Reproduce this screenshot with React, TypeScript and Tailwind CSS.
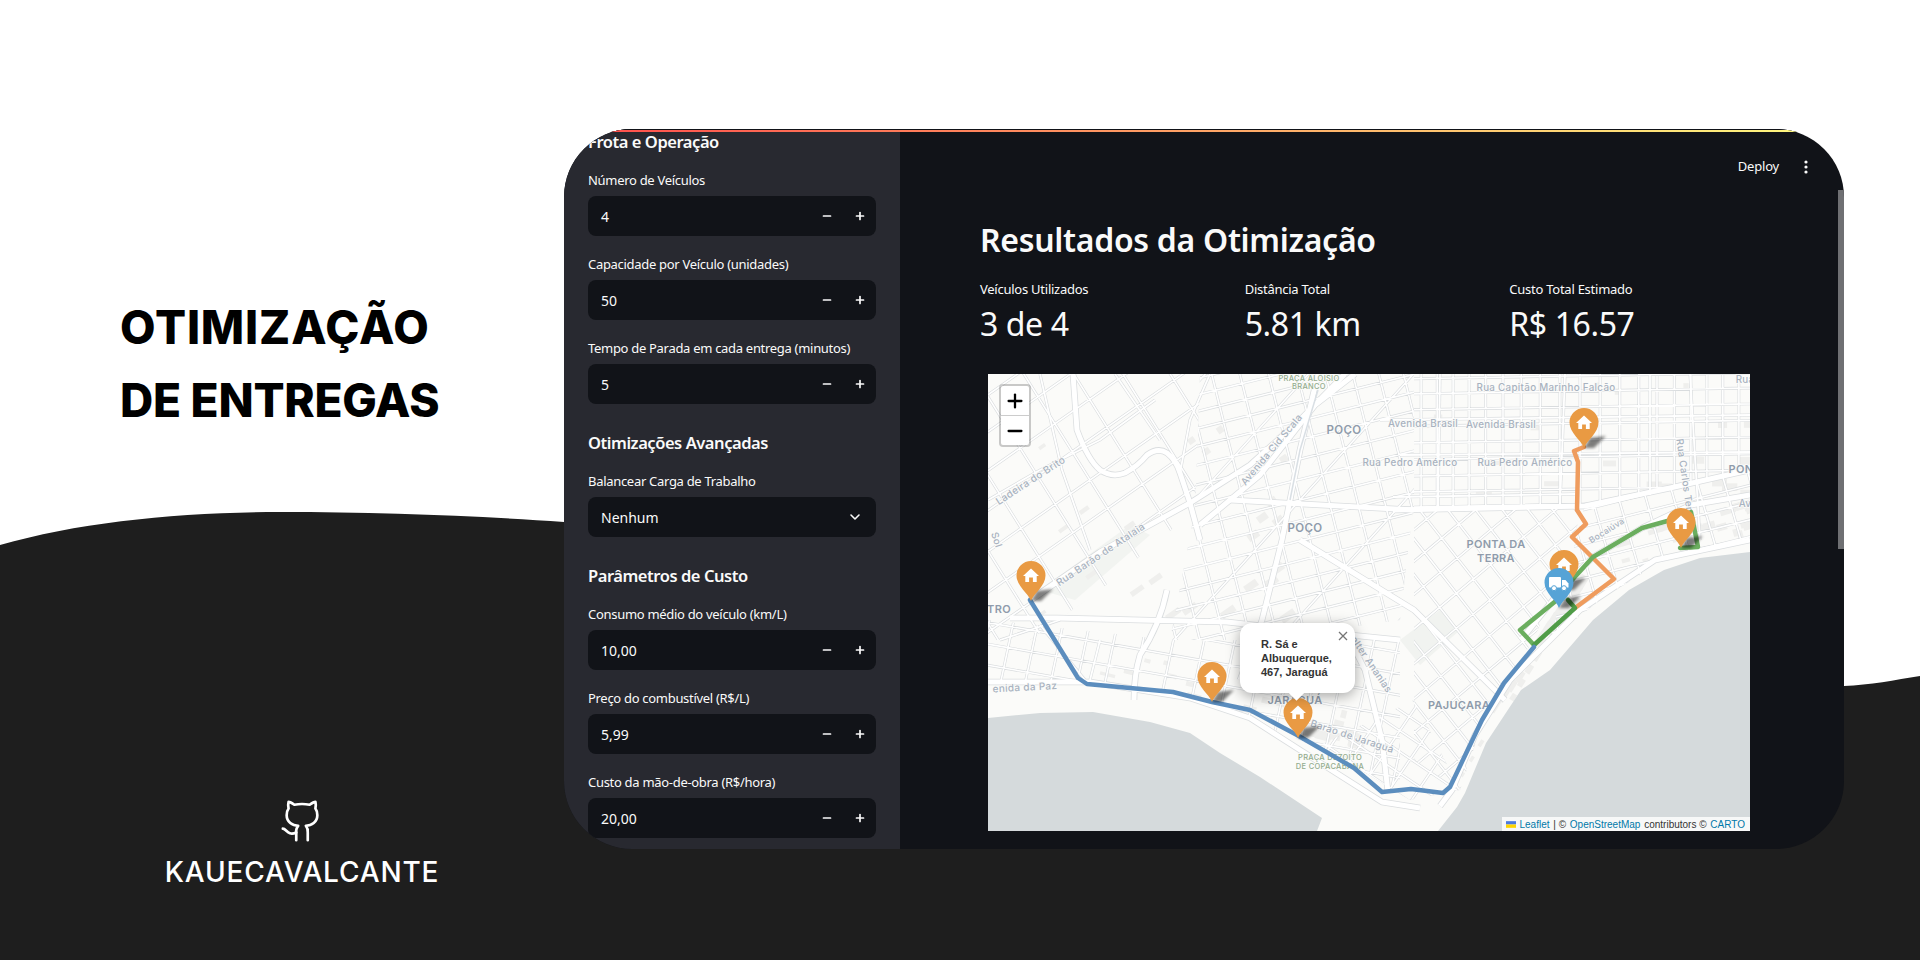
import React from "react";
import { Minus, Plus, ChevronDown } from "lucide-react";

type Dist = { id: string; clip: string; fam: [number, number, number, number][] };
// fam: angle, spacing, center x, center y
const districts: Dist[] = [
  { id: "a", clip: "988,374 1200,374 1195,510 1100,590 1030,640 988,640", fam: [[-35, 30, 1090, 480], [58, 38, 1090, 480]] },
  { id: "b", clip: "1200,374 1414,374 1414,500 1400,620 1260,640 1170,640 1195,510", fam: [[-14, 18, 1300, 500], [76, 25, 1300, 500], [-48, 70, 1300, 500]] },
  { id: "c", clip: "1414,374 1750,374 1750,470 1585,505 1414,510", fam: [[-1, 15, 1580, 440], [90, 18, 1580, 440]] },
  { id: "d", clip: "1414,510 1585,505 1534,640 1490,700 1460,790 1414,760", fam: [[52, 20, 1490, 600], [-40, 24, 1490, 600]] },
  { id: "e", clip: "1585,505 1750,470 1750,540 1670,556 1600,600 1550,640", fam: [[-14, 15, 1680, 520], [74, 24, 1680, 520]] },
  { id: "f", clip: "988,620 1170,640 1400,640 1400,790 1300,740 1190,695 1090,680 988,680", fam: [[10, 19, 1200, 660], [-78, 27, 1200, 660]] },
  { id: "g", clip: "1320,745 1414,700 1460,790 1410,800", fam: [[34, 16, 1380, 760], [-56, 22, 1380, 760]] },
];

function jitter(i: number) {
  return Math.sin(i * 12.9898) * 0.28;
}

function lines(d: Dist) {
  const out: string[] = [];
  d.fam.forEach(([a, s, cx, cy]) => {
    const r = (a * Math.PI) / 180;
    const dx = Math.cos(r);
    const dy = Math.sin(r);
    for (let i = -30; i <= 30; i++) {
      const o = (i + jitter(i)) * s;
      const px = cx - dy * o;
      const py = cy + dx * o;
      out.push(`M${(px - dx * 700).toFixed(1)} ${(py - dy * 700).toFixed(1)}L${(px + dx * 700).toFixed(1)} ${(py + dy * 700).toFixed(1)}`);
    }
  });
  return out.join("");
}

const mainRoads = [
  "M1073 374L1077 430Q1088 460 1100 470Q1112 478 1125 473Q1138 466 1147 455Q1158 447 1167 453Q1176 460 1180 473L1190 503L1200 540",
  "M1030 600L1100 552L1190 503L1250 465L1300 420L1345 374",
  "M1200 525L1260 475L1315 405L1355 374",
  "M1318 374L1300 450L1282 540L1262 620L1240 680",
  "M1167 590Q1160 625 1140 655Q1134 675 1134 700",
  "M1010 618L1057 618L1140 620L1227 622L1300 630L1400 640",
  "M988 682L1090 682L1190 698L1250 718L1300 750L1382 802L1420 808",
  "M1440 806L1452 790L1475 735L1510 680L1580 610L1655 560L1750 540",
  "M1393 510L1585 506L1670 488L1750 470",
  "M1521 640L1565 585L1593 557L1642 528L1691 505L1750 495",
  "M1230 500L1414 510",
  "M1300 540L1414 610L1505 700",
  "M1388 792L1382 740L1365 670L1350 640",
];

const smallRoads = [
  "M988 500L1040 470L1100 440L1155 400", "M1040 374L1062 470L1090 550", "M1115 374L1160 440", "M1210 374L1190 420L1180 473",
  "M1440 374L1438 510", "M1565 374L1560 506", "M1650 374L1650 495", "M1690 374L1700 540", "M1380 420L1750 415", "M1400 455L1750 452",
  "M1393 497L1575 494", "M1100 640L1090 680", "M1040 625L1085 680", "M1000 640L1060 620",
];

const seeds = Array.from({ length: 130 }, (_, i) => {
  const a = Math.abs(Math.sin(i * 91.7)) % 1;
  const b = Math.abs(Math.sin(i * 37.3)) % 1;
  return { a, b, i };
});

function blocks() {
  return seeds.map(({ a, b, i }) => {
    let x: number, y: number, rot: number;
    if (i < 35) {
      x = 1460 + a * 115;
      y = 770 - a * 170 - b * 24 + 6;
      rot = -58;
    } else if (i < 60) {
      x = 1585 + a * 160;
      y = 580 - a * 50 - b * 30;
      rot = -16;
    } else if (i < 85) {
      x = 1090 + a * 260;
      y = 640 + a * 70 + b * 30;
      rot = 14;
    } else if (i < 110) {
      x = 1000 + a * 280;
      y = 400 + b * 220;
      rot = -35;
    } else {
      x = 1414 + a * 330;
      y = 380 + b * 110;
      rot = 0;
    }
    return (
      <rect
        key={i}
        x={x}
        y={y}
        width={5 + b * 11}
        height={3 + a * 5}
        fill="#efefed"
        transform={`rotate(${rot} ${x} ${y})`}
      />
    );
  });
}

function Pin({ x, y, blue }: { x: number; y: number; blue?: boolean }) {
  return (
    <g transform={`translate(${x} ${y})`}>
      <path d="M0 0L6 -10L22 -12L10 0Z" fill="#000" opacity="0.5" filter="url(#pinblur)" />
      <path
        d="M0 0C-3 -8 -14.5 -15 -14.5 -25.5A14.5 14.5 0 1 1 14.5 -25.5C14.5 -15 3 -8 0 0Z"
        fill={blue ? "#56a3d6" : "#e99a43"}
      />
      {blue ? (
        <g fill="#fff">
          <rect x="-10" y="-31" width="12" height="10.5" rx="1" />
          <path d="M3 -28L6.5 -28L9.5 -24.5L9.5 -20.5L3 -20.5Z" />
          <circle cx="-5" cy="-19.8" r="2.5" stroke="#56a3d6" strokeWidth="1" />
          <circle cx="5" cy="-19.8" r="2.5" stroke="#56a3d6" strokeWidth="1" />
        </g>
      ) : (
        <path
          d="M0 -32.5L-8 -25L-5.7 -25L-5.7 -19L-1.9 -19L-1.9 -23.5L1.9 -23.5L1.9 -19L5.7 -19L5.7 -25L8 -25Z"
          fill="#fff"
        />
      )}
    </g>
  );
}

function MapLabel({ x, y, t, size = 9.8, rot = 0, color = "#a8b2bf", weight = 500, sp = 0.3 }: { x: number; y: number; t: string; size?: number; rot?: number; color?: string; weight?: number; sp?: number }) {
  return (
    <text
      x={x}
      y={y}
      fontFamily="Inter, sans-serif"
      fontSize={size}
      fontWeight={weight}
      fill={color}
      letterSpacing={sp}
      textAnchor="middle"
      dominantBaseline="middle"
      stroke="#fbfbf9"
      strokeWidth="1.5"
      paintOrder="stroke"
      transform={rot ? `rotate(${rot} ${x} ${y})` : undefined}
    >
      {t}
    </text>
  );
}

function MapCanvas() {
  return (
    <svg viewBox="988 374 762 457" className="absolute inset-0 w-full h-full">
      <defs>
        <filter id="pinblur" x="-50%" y="-50%" width="200%" height="200%">
          <feGaussianBlur stdDeviation="1.8" />
        </filter>
        {districts.map((d) => (
          <clipPath id={`clip-${d.id}`} key={d.id}>
            <polygon points={d.clip} />
          </clipPath>
        ))}
      </defs>
      <rect x="988" y="374" width="762" height="457" fill="#fbfbf9" />
      <polygon points="1040,590 1130,525 1150,535 1075,600" fill="#f2f4f1" />
      <polygon points="1400,640 1440,610 1460,630 1420,665" fill="#f1f3f0" />
      {blocks()}
      {districts.map((d) => (
        <g clipPath={`url(#clip-${d.id})`} key={d.id} fill="none" stroke="#d9dcde" strokeWidth="2.8">
          <path d={lines(d)} />
        </g>
      ))}
      <g fill="none" stroke="#d9dcde" strokeWidth="3">
        {smallRoads.map((r, i) => (
          <path d={r} key={i} />
        ))}
      </g>
      <g fill="none" stroke="#dadddf" strokeWidth="6.5" strokeLinejoin="round">
        {mainRoads.map((r, i) => (
          <path d={r} key={i} />
        ))}
      </g>
      {districts.map((d) => (
        <g clipPath={`url(#clip-${d.id})`} key={d.id} fill="none" stroke="#ffffff" strokeWidth="1.6">
          <path d={lines(d)} />
        </g>
      ))}
      <g fill="none" stroke="#ffffff" strokeWidth="1.8">
        {smallRoads.map((r, i) => (
          <path d={r} key={i} />
        ))}
      </g>
      <g fill="none" stroke="#ffffff" strokeWidth="5" strokeLinejoin="round">
        {mainRoads.map((r, i) => (
          <path d={r} key={i} />
        ))}
      </g>
      <path d="M1318 390L1300 450L1290 500" fill="none" stroke="#d9dfe4" strokeWidth="1.5" />
      <polygon points="988,718 1040,713 1093,712 1150,722 1190,733 1220,753 1260,777 1322,818 1317,831 988,831" fill="#d5dadc" />
      <polygon points="1438,831 1457,807 1465,793 1486,743 1521,690 1550,670 1593,620 1629,590 1664,570 1700,558 1750,552 1750,831" fill="#d5dadc" />

      <MapLabel x={1309} y={378.5} t="PRAÇA ALOISIO" size={7.5} color="#93ac8e" />
      <MapLabel x={1309} y={387} t="BRANCO" size={7.5} color="#93ac8e" />
      <MapLabel x={1546} y={388} t="Rua Capitão Marinho Falcão" />
      <MapLabel x={1745} y={380} t="Rua" />
      <MapLabel x={1423} y={424} t="Avenida Brasil" />
      <MapLabel x={1501} y={425} t="Avenida Brasil" />
      <MapLabel x={1410} y={463} t="Rua Pedro Américo" />
      <MapLabel x={1525} y={463} t="Rua Pedro Américo" />
      <MapLabel x={1344} y={431} t="POÇO" size={11.5} color="#8f9bab" weight={600} />
      <MapLabel x={1305} y={529} t="POÇO" size={11.5} color="#8f9bab" weight={600} />
      <MapLabel x={1496} y={545} t="PONTA DA" size={11} color="#8f9bab" weight={600} />
      <MapLabel x={1496} y={559} t="TERRA" size={11} color="#8f9bab" weight={600} />
      <MapLabel x={1741} y={470} t="PON" size={11} color="#8f9bab" weight={600} />
      <MapLabel x={1745} y={504} t="Av" />
      <MapLabel x={1684} y={475} t="Rua Carlos Ter" rot={82} />
      <MapLabel x={1607} y={531} t="Bocaiúva" rot={-32} size={8.5} />
      <MapLabel x={1272} y={450} t="Avenida Cid Scala" rot={-50} />
      <MapLabel x={1031} y={481} t="Ladeira do Brito" rot={-33} size={10} />
      <MapLabel x={1101} y={555} t="Rua Barão de Atalaia" rot={-34} size={10} />
      <MapLabel x={996} y={540} t="Sol" rot={72} />
      <MapLabel x={999} y={610} t="TRO" size={11} color="#8f9bab" weight={600} />
      <MapLabel x={1025} y={688} t="enida da Paz" rot={-3} size={10} />
      <MapLabel x={1295} y={701} t="JARAGUÁ" size={11} color="#8f9bab" weight={600} />
      <MapLabel x={1352} y={737} t="Barão de Jaraguá" rot={18} />
      <MapLabel x={1330} y={758} t="PRAÇA DEZOITO" size={7.5} color="#93ac8e" />
      <MapLabel x={1330} y={767} t="DE COPACABANA" size={7.5} color="#93ac8e" />
      <MapLabel x={1459} y={706} t="PAJUÇARA" size={11} color="#8f9bab" weight={600} />
      <MapLabel x={1371} y={665} t="alter Ananias" rot={56} />

      <g fill="none" strokeLinejoin="round" strokeLinecap="round" strokeWidth="4.5">
        <path d="M1584 447L1574 451L1578 462L1577 510L1586 524L1572 537L1614 579L1575 608" stroke="#ef9c5e" />
        <path d="M1671 520L1642 528L1593 557L1572 580L1557 600L1520 630L1534 645" stroke="#6bae5f" />
        <path d="M1671 520L1691 512L1698 547L1680 548" stroke="#6bae5f" />
        <path d="M1534 645L1575 608L1568 600" stroke="#509c47" />
        <path d="M1030 600L1078 678L1087 684L1173 692L1212 702L1250 710L1297 735L1354 768L1382 792L1411 789L1443 793L1450 787L1482 720L1504 683L1534 647" stroke="#5b8dbe" />
      </g>
      <Pin x={1584} y={448} />
      <Pin x={1681} y={548} />
      <Pin x={1564} y={590} />
      <Pin x={1559} y={608} blue />
      <Pin x={1031} y={601} />
      <Pin x={1212} y={702} />
      <Pin x={1298} y={738} />
    </svg>
  );
}

function Label({ children }: { children: React.ReactNode }) {
  return <div className="h-[20px] mb-[6px] text-[13px] leading-[20px] tracking-[-0.3px] text-[#fafafa] whitespace-nowrap">{children}</div>;
}

function NumberField({ label, value }: { label: string; value: string }) {
  return (
    <div className="mb-[18px]">
      <Label>{label}</Label>
      <div className="h-[40px] rounded-lg bg-[#111318] flex items-center pl-[13px] text-[#fafafa] text-[14px]">
        <span className="flex-1">{value}</span>
        <div className="w-[32px] flex justify-center"><Minus size={12} strokeWidth={3.4} /></div>
        <div className="w-[33px] flex justify-center"><Plus size={12} strokeWidth={3.4} /></div>
      </div>
    </div>
  );
}

function SideHeading({ children, first }: { children: React.ReactNode; first?: boolean }) {
  return (
    <div className={first ? "mb-[13px]" : "pt-[7px] mb-[14px]"}>
      <div className={`h-[28px] ${first ? "leading-[25px]" : "leading-[27px]"} text-[16.5px] tracking-[-0.45px] font-semibold text-[#fafafa] whitespace-nowrap`}>{children}</div>
    </div>
  );
}

function Metric({ label, value }: { label: string; value: string }) {
  return (
    <div>
      <div className="h-[20px] leading-[20px] text-[13px] tracking-[-0.25px] text-[#fafafa]">{label}</div>
      <div className="mt-[3px] h-[44px] leading-[44px] text-[32px] tracking-[-0.4px] text-[#fafafa]">{value}</div>
    </div>
  );
}

export default function App() {
  return (
    <div className="relative w-[1920px] h-[960px] overflow-hidden bg-white flex font-['Noto_Sans',sans-serif]">
      <svg viewBox="0 0 1920 960" className="absolute inset-0 w-full h-full">
        <path
          d="M0 545C80 522 180 512 280 512C380 512 480 516 564 522C1000 560 1500 700 1844 686C1870 685 1895 680 1920 676L1920 960L0 960Z"
          fill="#1e1e1e"
        />
      </svg>

      <div className="relative w-[564px] h-full flex flex-col">
        <div className="pl-[120px] pt-[291px] font-['Inter',sans-serif] font-extrabold text-[46px] leading-[73px] text-black">
          <div className="whitespace-nowrap tracking-[0.85px]">OTIMIZAÇÃO</div>
          <div className="whitespace-nowrap tracking-[-0.25px]">DE ENTREGAS</div>
        </div>
        <div className="mt-[361px] w-[604px] flex flex-col items-center text-white">
          <svg viewBox="0 0 24 24" width="46" height="46" fill="none" stroke="#fff" strokeWidth="1.4" strokeLinecap="round" strokeLinejoin="round">
            <path d="M15 22v-4a4.8 4.8 0 0 0-1-3.5c3 0 6-2 6-5.5.08-1.25-.27-2.48-1-3.5.28-1.15.28-2.35 0-3.5 0 0-1 0-3 1.5-2.64-.5-5.36-.5-8 0C6 2 5 2 5 2c-.3 1.15-.3 2.35 0 3.5A5.403 5.403 0 0 0 4 9c0 3.5 3 5.5 6 5.5-.39.49-.68 1.05-.85 1.65-.17.6-.22 1.23-.15 1.85v4" />
            <path d="M9 18c-4.51 2-5-2-7-2" />
          </svg>
          <div className="mt-[10px] font-['Inter',sans-serif] font-medium text-[28px] leading-[36px] tracking-[0.85px] whitespace-nowrap">KAUECAVALCANTE</div>
        </div>
      </div>

      <div className="relative mt-[129px] w-[1280px] h-[720px] rounded-[68px] overflow-hidden flex bg-[#111318]">
        <aside className="w-[336px] h-full bg-[#282930] px-[24px] overflow-hidden shrink-0">
          <SideHeading first>Frota e Operação</SideHeading>
          <NumberField label="Número de Veículos" value="4" />
          <NumberField label="Capacidade por Veículo (unidades)" value="50" />
          <NumberField label="Tempo de Parada em cada entrega (minutos)" value="5" />
          <SideHeading>Otimizações Avançadas</SideHeading>
          <div className="mb-[18px]">
            <Label>Balancear Carga de Trabalho</Label>
            <div className="h-[40px] rounded-lg bg-[#111318] flex items-center justify-between pl-[13px] pr-[13px] text-[#fafafa] text-[14px]">
              <span>Nenhum</span>
              <ChevronDown size={16} strokeWidth={2.4} />
            </div>
          </div>
          <SideHeading>Parâmetros de Custo</SideHeading>
          <NumberField label="Consumo médio do veículo (km/L)" value="10,00" />
          <NumberField label="Preço do combustível (R$/L)" value="5,99" />
          <NumberField label="Custo da mão-de-obra (R$/hora)" value="20,00" />
        </aside>

        <main className="relative flex-1 pl-[80px] text-[#fafafa]">
          <div className="absolute right-0 top-[61px] w-[6px] h-[359px] bg-[#6f7073]" />
          <div className="h-[76px] flex items-center justify-end pr-[36px]">
            <span className="text-[13px] tracking-[-0.2px] mr-[25px]">Deploy</span>
            <svg width="4" height="14" viewBox="0 0 4 14" fill="#fafafa">
              <circle cx="2" cy="2" r="1.6" />
              <circle cx="2" cy="7" r="1.6" />
              <circle cx="2" cy="12" r="1.6" />
            </svg>
          </div>
          <h1 className="h-[70px] leading-[69px] text-[32px] tracking-[-0.3px] font-semibold whitespace-nowrap">Resultados da Otimização</h1>
          <div className="mt-[4px] grid grid-cols-3 w-[794px]">
            <Metric label="Veículos Utilizados" value="3 de 4" />
            <Metric label="Distância Total" value="5.81 km" />
            <Metric label="Custo Total Estimado" value="R$ 16.57" />
          </div>
          <div className="relative mt-[28px] ml-[8px] w-[762px] h-[457px] overflow-hidden">
            <MapCanvas />
            <div className="absolute left-[11px] top-[10px] w-[32px] border-2 border-[rgba(0,0,0,0.2)] rounded bg-clip-padding bg-white text-black">
              <div className="h-[30px] flex items-center justify-center border-b border-[#ccc]"><Plus size={22} strokeWidth={2.5} /></div>
              <div className="h-[29px] flex items-center justify-center"><Minus size={22} strokeWidth={2.5} /></div>
            </div>
            <div className="absolute left-[252px] top-[249px] w-[115px] h-[70px] rounded-xl bg-white shadow-[0_3px_14px_rgba(0,0,0,0.35)] pl-[21px] pt-[14px] font-['Liberation_Sans',sans-serif] font-bold text-[11px] leading-[14px] text-[#333]">
              <div className="absolute left-[50px] top-[62px] w-[13px] h-[13px] rotate-45 bg-white" />
              <div className="relative whitespace-nowrap">R. Sá e</div>
              <div className="relative whitespace-nowrap">Albuquerque,</div>
              <div className="relative whitespace-nowrap">467, Jaraguá</div>
              <svg className="absolute right-[7px] top-[8px]" width="10" height="10" viewBox="0 0 10 10" stroke="#757575" strokeWidth="1.3" fill="none">
                <path d="M1 1L9 9M9 1L1 9" />
              </svg>
            </div>
            <div className="absolute right-0 bottom-0 h-[14px] pl-[4px] pr-[5px] bg-[rgba(255,255,255,0.8)] flex items-center gap-[1px] font-['Liberation_Sans',sans-serif] text-[10px] text-[#333] whitespace-nowrap">
              <svg width="10" height="7" viewBox="0 0 12 8" className="mr-[2px]">
                <rect width="12" height="4" fill="#4C7BE1" />
                <rect y="4" width="12" height="4" fill="#FFD500" />
              </svg>
              <span className="text-[#0078A8]">Leaflet</span>
              <span>&nbsp;| ©&nbsp;</span>
              <span className="text-[#0078A8]">OpenStreetMap</span>
              <span>&nbsp;contributors ©&nbsp;</span>
              <span className="text-[#0078A8]">CARTO</span>
            </div>
          </div>
        </main>
        <div className="absolute top-0 left-0 right-0 pt-[1px] bg-[#111318]">
          <div className="h-[2px] bg-[linear-gradient(90deg,#ff4b4b,#fffd80)]" />
        </div>
      </div>
    </div>
  );
}
